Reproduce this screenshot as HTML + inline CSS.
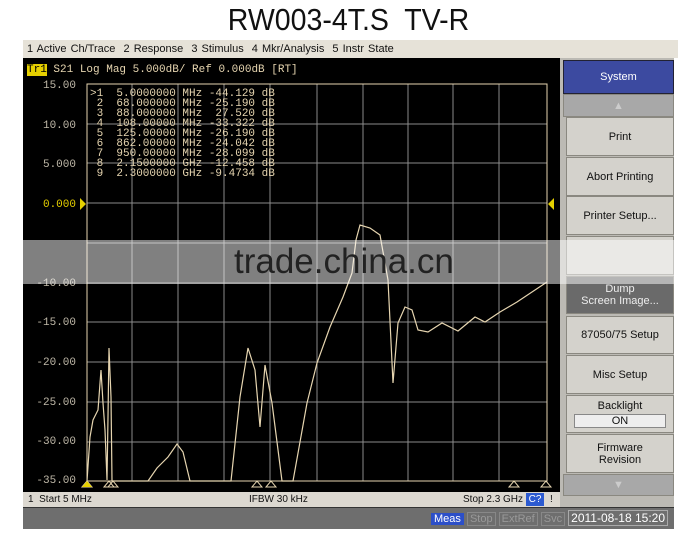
<!DOCTYPE html>
<html><head><meta charset="utf-8"><style>
body{margin:0;width:697px;height:547px;background:#fff;position:relative;overflow:hidden;font-family:"Liberation Sans",sans-serif}
.a{position:absolute}
.t{font-family:"Liberation Mono",monospace;color:#e6d5b0;font-size:11px;line-height:10px;white-space:pre}
.k{position:absolute;left:566px;width:106px;background:#d4d2cc;border:1px solid #8a8880;font-size:11px;color:#111;text-align:center;display:flex;align-items:center;justify-content:center;flex-direction:column}
.yl{position:absolute;left:30px;width:46px;text-align:right;font-family:"Liberation Mono",monospace;font-size:11px;color:#bfb8a8}
</style></head><body>
<div class="a" style="left:0;top:2px;width:697px;text-align:center;font-size:31px;color:#111;transform:scaleX(0.92)">RW003-4T.S&nbsp; TV-R</div>
<div class="a" style="left:23px;top:40px;width:651px;height:18px;background:#e6e2d8;font-size:11px;line-height:18px;color:#111;padding-left:4px;word-spacing:1px">1 Active Ch/Trace &nbsp;2 Response &nbsp;3 Stimulus &nbsp;4 Mkr/Analysis &nbsp;5 Instr State</div>
<div class="a" style="left:23px;top:58px;width:537px;height:434px;background:#000"></div>
<div class="a" style="left:560px;top:58px;width:114px;height:450px;background:#bcbab4"></div>
<div class="a t" style="left:27px;top:65px"><span style="background:#e6d000;color:#000">Tr1</span> S21 Log Mag 5.000dB/ Ref 0.000dB [RT]</div>
<div class="yl" style="top:80px">15.00</div><div class="yl" style="top:120px">10.00</div><div class="yl" style="top:159px">5.000</div><div class="yl" style="top:199px;color:#e6d000">0.000</div>
<div class="yl" style="top:278px">-10.00</div><div class="yl" style="top:317px">-15.00</div><div class="yl" style="top:357px">-20.00</div><div class="yl" style="top:397px">-25.00</div><div class="yl" style="top:436px">-30.00</div><div class="yl" style="top:475px">-35.00</div>
<svg class="a" style="left:0;top:0" width="697" height="547">
<g stroke="#8a8a8a" stroke-width="1">
<path d="M87 84H547M87 124H547M87 163H547M87 203H547M87 243H547M87 283H547M87 322H547M87 362H547M87 402H547M87 442H547"/>
<path d="M132 84V481M178 84V481M224 84V481M270 84V481M317 84V481M363 84V481M408 84V481M453 84V481M499 84V481"/>
</g>
<rect x="87" y="84" width="460" height="397" fill="none" stroke="#e6d5b0" stroke-width="1"/>
<polygon points="80,198 86,204 80,210" fill="#e6d000"/><polygon points="554,198 548,204 554,210" fill="#e6d000"/>
<polyline fill="none" stroke="#e6d5b0" stroke-width="1.2" points="87,481 90,437 93,420 98,410 101,370 103,403 105,430 107,480 108,417 109,348 111,397 112,481 148,481 157,468 168,457 177,444 183,452 190,481 231,481 240,397 248,348 255,370 260,427 265,365 272,403 282,481 293,481 307,403 317,363 330,327 343,297 352,273 356,240 360,225 370,228 380,235 388,280 393,383 398,323 405,307 412,310 418,330 428,332 442,323 458,331 475,317 485,322 500,312 517,302 547,282"/>
<g fill="none" stroke="#e6d5b0" stroke-width="1"><path d="M82 487l5-6 5 6zM104 487l5-6 5 6zM108 487l5-6 5 6zM252 487l5-6 5 6zM266 487l5-6 5 6zM509 487l5-6 5 6zM541 487l5-6 5 6z"/></g>
<path d="M82 487l5-6 5 6z" fill="#e6d000"/>
</svg>
<div class="a t" style="left:90px;top:89px">&gt;1  5.0000000 MHz -44.129 dB
 2  68.000000 MHz -25.190 dB
 3  88.000000 MHz  27.520 dB
 4  108.00000 MHz -33.322 dB
 5  125.00000 MHz -26.190 dB
 6  862.00000 MHz -24.042 dB
 7  950.00000 MHz -28.099 dB
 8  2.1500000 GHz -12.458 dB
 9  2.3000000 GHz -9.4734 dB</div>
<div class="a" style="left:23px;top:492px;width:537px;height:15px;background:#dcd8d0;font-size:10px;line-height:15px;color:#111">
<span class="a" style="left:5px">1&nbsp; Start 5 MHz</span><span class="a" style="left:226px">IFBW 30 kHz</span><span class="a" style="left:440px">Stop 2.3 GHz</span><span class="a" style="left:503px;top:1px;width:18px;height:13px;background:#2c5ad0;color:#fff;line-height:13px;text-align:center">C?</span><span class="a" style="left:527px">!</span></div>
<div class="a" style="left:23px;top:507px;width:651px;height:21px;background:#6e6e6e;border-top:1px solid #333"></div>
<div class="a" style="left:431px;top:511px;font-size:11px;line-height:15px;color:#fff;white-space:nowrap">
<span style="background:#2c4fc8;padding:0 3px">Meas</span> <span style="color:#999;border:1px solid #888;padding:0 2px">Stop</span> <span style="color:#999;border:1px solid #888;padding:0 2px">ExtRef</span> <span style="color:#999;border:1px solid #888;padding:0 2px">Svc</span> <span style="border:1px solid #aaa;padding:0 2px;font-size:12px">2011-08-18 15:20</span></div>
<div class="k" style="top:60px;left:563px;width:109px;height:32px;background:#3c4aa0;color:#fff;border-color:#223">System</div>
<div class="k" style="top:94px;left:563px;width:109px;height:21px;background:#a8a8a8"><span style="color:#ccc">▲</span></div>
<div class="k" style="top:117px;height:37px">Print</div>
<div class="k" style="top:157px;height:37px">Abort Printing</div>
<div class="k" style="top:196px;height:37px">Printer Setup...</div>
<div class="k" style="top:236px;height:37px"></div>
<div class="k" style="top:276px;height:36px;background:#6a6a6a;color:#eee">Dump<br>Screen Image...</div>
<div class="k" style="top:316px;height:36px">87050/75 Setup</div>
<div class="k" style="top:355px;height:37px">Misc Setup</div>
<div class="k" style="top:395px;height:36px">Backlight<span style="display:block;width:90px;background:#eee;border:1px solid #888;margin-top:2px">ON</span></div>
<div class="k" style="top:434px;height:37px">Firmware<br>Revision</div>
<div class="k" style="top:474px;left:563px;width:109px;height:20px;background:#a8a8a8"><span style="color:#ccc">▼</span></div>
<div class="a" style="left:23px;top:240px;width:651px;height:44px;background:rgba(255,255,255,0.5)"></div>
<div class="a" style="left:234px;top:240px;font-size:35px;color:#222;line-height:44px">trade.china.cn</div>
</body></html>
